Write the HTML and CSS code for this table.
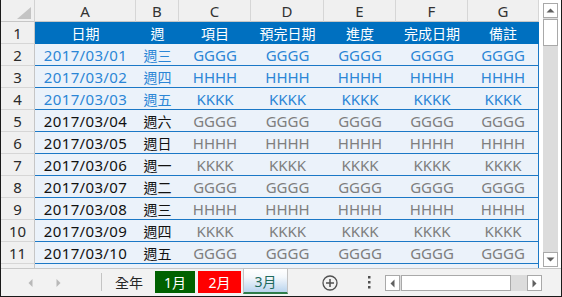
FILE: index.html
```html
<!DOCTYPE html>
<html>
<head>
<meta charset="utf-8">
<link rel="stylesheet" href="styles.css">
</head>
<body>
<div class="window">
  <div class="main">
    <div class="sheet">
      <div class="corner"><svg width="16" height="14" viewBox="0 0 16 14"><polygon points="15,1 15,13 1,13" fill="#c4c4c4"/></svg></div>
      <div class="ch">A</div><div class="ch">B</div><div class="ch">C</div><div class="ch">D</div><div class="ch">E</div><div class="ch">F</div><div class="ch last">G</div>

      <div class="row hdr">
        <div class="rh">1</div><div class="c cjk">日期</div><div class="c cjk">週</div><div class="c cjk">項目</div><div class="c cjk">預完日期</div><div class="c cjk">進度</div><div class="c cjk">完成日期</div><div class="c cjk g">備註</div>
      </div>
      <div class="row blue">
        <div class="rh">2</div><div class="c d">2017/03/01</div><div class="c cjk">週三</div><div class="c">GGGG</div><div class="c">GGGG</div><div class="c">GGGG</div><div class="c">GGGG</div><div class="c g">GGGG</div>
      </div>
      <div class="row blue">
        <div class="rh">3</div><div class="c d">2017/03/02</div><div class="c cjk">週四</div><div class="c">HHHH</div><div class="c">HHHH</div><div class="c">HHHH</div><div class="c">HHHH</div><div class="c g">HHHH</div>
      </div>
      <div class="row blue">
        <div class="rh">4</div><div class="c d">2017/03/03</div><div class="c cjk">週五</div><div class="c">KKKK</div><div class="c">KKKK</div><div class="c">KKKK</div><div class="c">KKKK</div><div class="c g">KKKK</div>
      </div>
      <div class="row plain">
        <div class="rh">5</div><div class="c d">2017/03/04</div><div class="c cjk">週六</div><div class="c v">GGGG</div><div class="c v">GGGG</div><div class="c v">GGGG</div><div class="c v">GGGG</div><div class="c v g">GGGG</div>
      </div>
      <div class="row plain">
        <div class="rh">6</div><div class="c d">2017/03/05</div><div class="c cjk">週日</div><div class="c v">HHHH</div><div class="c v">HHHH</div><div class="c v">HHHH</div><div class="c v">HHHH</div><div class="c v g">HHHH</div>
      </div>
      <div class="row plain">
        <div class="rh">7</div><div class="c d">2017/03/06</div><div class="c cjk">週一</div><div class="c v">KKKK</div><div class="c v">KKKK</div><div class="c v">KKKK</div><div class="c v">KKKK</div><div class="c v g">KKKK</div>
      </div>
      <div class="row plain">
        <div class="rh">8</div><div class="c d">2017/03/07</div><div class="c cjk">週二</div><div class="c v">GGGG</div><div class="c v">GGGG</div><div class="c v">GGGG</div><div class="c v">GGGG</div><div class="c v g">GGGG</div>
      </div>
      <div class="row plain">
        <div class="rh">9</div><div class="c d">2017/03/08</div><div class="c cjk">週三</div><div class="c v">HHHH</div><div class="c v">HHHH</div><div class="c v">HHHH</div><div class="c v">HHHH</div><div class="c v g">HHHH</div>
      </div>
      <div class="row plain">
        <div class="rh">10</div><div class="c d">2017/03/09</div><div class="c cjk">週四</div><div class="c v">KKKK</div><div class="c v">KKKK</div><div class="c v">KKKK</div><div class="c v">KKKK</div><div class="c v g">KKKK</div>
      </div>
      <div class="row plain">
        <div class="rh">11</div><div class="c d">2017/03/10</div><div class="c cjk">週五</div><div class="c v">GGGG</div><div class="c v">GGGG</div><div class="c v">GGGG</div><div class="c v">GGGG</div><div class="c v g">GGGG</div>
      </div>
      <div class="row rest">
        <div class="rh"></div><div class="c"></div><div class="c"></div><div class="c"></div><div class="c"></div><div class="c"></div><div class="c"></div><div class="c g"></div>
      </div>
    </div>
    <div class="vscroll">
      <div class="track">
        <div class="btn"><svg width="9" height="5" viewBox="0 0 9 5"><polygon points="0.5,4.5 4.5,0.5 8.5,4.5" fill="#606060"/></svg></div>
        <div class="vthumb"></div>
        <div class="spacer"></div>
        <div class="btn"><svg width="9" height="5" viewBox="0 0 9 5"><polygon points="0.5,0.5 8.5,0.5 4.5,4.5" fill="#606060"/></svg></div>
      </div>
    </div>
  </div>
  <div class="tabbar">
    <div class="nav">
      <svg width="5" height="8" viewBox="0 0 5 8"><polygon points="4.5,0 4.5,8 0.5,4" fill="#b8b8b8"/></svg>
      <svg width="5" height="8" viewBox="0 0 5 8"><polygon points="0.5,0 0.5,8 4.5,4" fill="#b8b8b8"/></svg>
    </div>
    <div class="sep"></div>
    <div class="tab all">全年</div>
    <div class="tab jan">1月</div>
    <div class="tab feb">2月</div>
    <div class="tab mar">3月</div>
    <div class="tools">
      <svg width="16" height="16" viewBox="0 0 16 16"><circle cx="8" cy="8" r="7" fill="none" stroke="#505050" stroke-width="1.3"/><path d="M8 4v8M4 8h8" stroke="#505050" stroke-width="1.5"/></svg>
      <svg class="dots" width="3" height="13" viewBox="0 0 3 13"><rect x="0" y="0" width="2.5" height="2.5" fill="#505050"/><rect x="0" y="5" width="2.5" height="2.5" fill="#505050"/><rect x="0" y="10" width="2.5" height="2.5" fill="#505050"/></svg>
    </div>
    <div class="hscroll">
      <div class="hbtn"><svg width="5" height="9" viewBox="0 0 5 9"><polygon points="4.5,0.5 4.5,8.5 0.5,4.5" fill="#606060"/></svg></div>
      <div class="hthumb"></div>
      <div class="hspace"></div>
      <div class="hbtn"><svg width="5" height="9" viewBox="0 0 5 9"><polygon points="0.5,0.5 0.5,8.5 4.5,4.5" fill="#606060"/></svg></div>
    </div>
  </div>
</div>
</body>
</html>
```

FILE: styles.css
```css
* { box-sizing: border-box; }
html, body { margin: 0; padding: 0; background: #fff; }
body {
  font-family: "Noto Sans", "Noto Sans CJK TC", sans-serif;
  font-size: 15px;
}
.window {
  width: 562px;
  height: 297px;
  border-left: 1px solid #1a1a1a;
  border-right: 1px solid #1a1a1a;
  border-bottom: 1px solid #1a1a1a;
  display: flex;
  flex-direction: column;
  overflow: hidden;
}
.main {
  height: 268px;
  display: flex;
}
.sheet {
  width: 538px;
  display: grid;
  grid-template-columns: 34px 101px 43px 72px 73px 72px 72px 71px;
  grid-template-rows: 22px repeat(11, 22px) 1fr;
  background: #fff;
}
.row { display: contents; }
.corner {
  background: #f0f0f0;
  border-right: 1px solid #d2d2d2;
  border-bottom: 1px solid #c6c6c6;
  display: flex;
  align-items: flex-end;
  justify-content: flex-end;
  padding: 0 2px 1px 0;
}
.ch {
  background: #f0f0f0;
  border-right: 1px solid #d6d6d6;
  border-bottom: 1px solid #c6c6c6;
  color: #333;
  display: flex;
  align-items: center;
  justify-content: center;
  font-size: 15px;
  padding-top: 1px;
}
.ch.last { border-right: 1px solid #d6d6d6; }
.rh {
  background: #f0f0f0;
  border-right: 1px solid #c6c6c6;
  border-bottom: 1px solid #d6d6d6;
  color: #2a2a2a;
  display: flex;
  align-items: center;
  justify-content: center;
  font-size: 15px;
}
.c {
  display: flex;
  align-items: center;
  justify-content: center;
  white-space: nowrap;
  background: #ebf2fa;
  border-bottom: 1px solid #1b78c6;
  padding-top: 1px;
}
.c.g { border-right: 1px solid #1b78c6; }
.cjk { font-size: 14px; }
.d { letter-spacing: 0.35px; }
.hdr .c { background: #0070c0; color: #fff; border-bottom-color: #0070c0; }
.hdr .c.g { border-right-color: #0070c0; }
.blue .c { color: #2b86d6; }
.plain .c { color: #111; }
.plain .c.v { color: #7e7e7e; }
.rest .c { background: #ebf2fa; border-bottom: none; }
.rest .rh { border-bottom: none; }
.vscroll {
  width: 22px;
  padding: 3px 3px 1px 4px;
  background: #fff;
  display: flex;
}
.track {
  flex: 1;
  background: #dcdcdc;
  display: flex;
  flex-direction: column;
}
.btn {
  height: 15px;
  background: #fff;
  border: 1px solid #a9a9a9;
  display: flex;
  align-items: center;
  justify-content: center;
}
.vthumb {
  height: 27px;
  margin-top: 1px;
  background: #fff;
  border: 1px solid #a9a9a9;
}
.spacer { flex: 1; }
.tabbar {
  flex: 1;
  background: #f2f2f2;
  border-top: 1px solid #c8c8c8;
  display: flex;
  align-items: stretch;
  position: relative;
}
.nav {
  width: 100px;
  display: flex;
  align-items: center;
  gap: 23px;
  padding-left: 27px;
  padding-top: 1px;
}
.sep {
  width: 1px;
  background: #c4c4c4;
  margin: 4px 0 5px 0;
}
.tab {
  display: flex;
  align-items: center;
  justify-content: center;
  font-size: 14px;
  margin-top: 2px;
  margin-bottom: 3px;
}
.tab.all { width: 50px; margin-left: 2px; color: #262626; }
.tab.jan { width: 40px; background: #006100; color: #fff; margin-left: 1px; }
.tab.feb { width: 43px; background: #ff0000; color: #fff; margin-left: 3px; }
.tab.mar {
  width: 45px;
  margin-left: 2px;
  margin-top: -1px;
  margin-bottom: 2px;
  color: #1f6a5c;
  background: linear-gradient(#ffffff, #f4f8fc 35%, #b9d4ee);
  border: 1px solid #c3c3c3;
  border-bottom: 2px solid #2f7d4a;
}
.tools {
  display: flex;
  align-items: center;
  padding-left: 34px;
  gap: 30px;
  width: 97px;
}
.hscroll {
  display: flex;
  margin: 6px 0 5px 0;
  width: 157px;
  background: #dcdcdc;
}
.hbtn {
  width: 15px;
  background: #fff;
  border: 1px solid #a9a9a9;
  display: flex;
  align-items: center;
  justify-content: center;
}
.hthumb {
  width: 110px;
  margin-left: 1px;
  background: #fff;
  border: 1px solid #a9a9a9;
}
.hspace { flex: 1; }
```
